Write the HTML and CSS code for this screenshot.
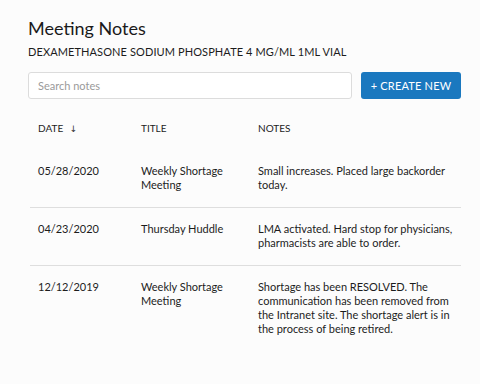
FILE: index.html
```html
<!DOCTYPE html>
<html lang="en">
<head>
  <meta charset="UTF-8"/>
  <title>Meeting Notes</title>
  <link rel="stylesheet" href="styles.css">
</head>
<body>
  <div class="page">
    <h1 class="title">Meeting Notes</h1>
    <p class="drug">DEXAMETHASONE SODIUM PHOSPHATE 4 MG/ML 1ML VIAL</p>

    <div class="toolbar">
      <input class="search" type="text" placeholder="Search notes">
      <button class="create-btn">+ CREATE NEW</button>
    </div>

    <table class="notes">
      <thead>
        <tr>
          <th class="col-date">DATE <span class="sort">&#8595;</span></th>
          <th class="col-title">TITLE</th>
          <th>NOTES</th>
        </tr>
      </thead>
      <tbody>
        <tr>
          <td>05/28/2020</td>
          <td>Weekly Shortage Meeting</td>
          <td>Small increases. Placed large backorder today.</td>
        </tr>
        <tr>
          <td>04/23/2020</td>
          <td>Thursday Huddle</td>
          <td>LMA activated. Hard stop for physicians, pharmacists are able to order.</td>
        </tr>
        <tr>
          <td>12/12/2019</td>
          <td>Weekly Shortage Meeting</td>
          <td>Shortage has been RESOLVED. The communication has been removed from the Intranet site. The shortage alert is in the process of being retired.</td>
        </tr>
      </tbody>
    </table>
  </div>
</body>
</html>
```

FILE: styles.css
```css
* {
  margin: 0;
  padding: 0;
  box-sizing: border-box;
}

body {
  background: #fcfcfc;
  font-family: 'Lato', 'Open Sans', sans-serif;
  color: #1c1c1c;
}

.page {
  padding: 16px 19px 0 28px;
}

.title {
  font-size: 18px;
  font-weight: 400;
  line-height: 24px;
  color: #1a1a1a;
}

.drug {
  margin-top: 4px;
  font-size: 11px;
  line-height: 16px;
  letter-spacing: 0.1px;
}

.toolbar {
  display: flex;
  gap: 9px;
  margin-top: 12px;
}

.search {
  flex: 1;
  height: 27px;
  border: 1px solid #dcdcdc;
  border-radius: 3px;
  background: #fff;
  padding: 0 9px;
  font-family: inherit;
  font-size: 11px;
  color: #333;
  outline: none;
}

.search::placeholder {
  color: #9a9a9a;
}

.create-btn {
  width: 100px;
  height: 27px;
  border: none;
  border-radius: 3px;
  background: #1a78bf;
  color: #fff;
  font-family: inherit;
  font-size: 11px;
  letter-spacing: 0.2px;
  cursor: pointer;
}

.notes {
  width: calc(100% - 2px);
  margin: 22px 0 0 2px;
  border-collapse: collapse;
  font-size: 11px;
  line-height: 14px;
}

.notes th {
  text-align: left;
  font-weight: 400;
  font-size: 10px;
  padding: 0 8px 14px;
  vertical-align: top;
}

.notes td {
  padding: 14px 8px 15px;
  vertical-align: top;
}

.col-date {
  width: 103px;
}

.col-title {
  width: 117px;
}

.notes tbody tr + tr td {
  border-top: 1px solid #dedede;
}

.sort {
  margin-left: 4px;
  font-family: 'DejaVu Sans', sans-serif;
  font-size: 9px;
  color: #333;
}
```
